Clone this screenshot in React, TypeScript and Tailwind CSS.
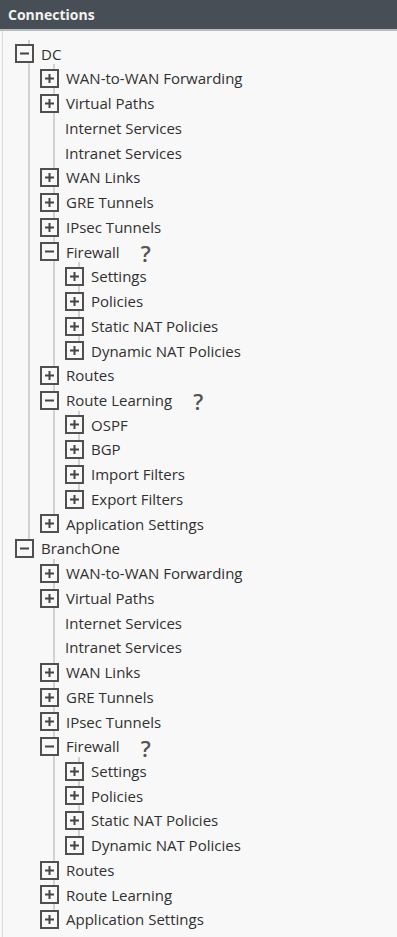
import React from "react";

type Node = { label: string; help?: boolean; box?: boolean; open?: boolean; children?: Node[] };

const leaf = (label: string): Node => ({ label, box: true });
const plain = (label: string): Node => ({ label, box: false });

const firewall = (): Node => ({
  label: "Firewall",
  help: true,
  box: true,
  open: true,
  children: [leaf("Settings"), leaf("Policies"), leaf("Static NAT Policies"), leaf("Dynamic NAT Policies")],
});

const tree: Node[] = [
  {
    label: "DC",
    box: true,
    open: true,
    children: [
      leaf("WAN-to-WAN Forwarding"),
      leaf("Virtual Paths"),
      plain("Internet Services"),
      plain("Intranet Services"),
      leaf("WAN Links"),
      leaf("GRE Tunnels"),
      leaf("IPsec Tunnels"),
      firewall(),
      leaf("Routes"),
      {
        label: "Route Learning",
        help: true,
        box: true,
        open: true,
        children: [leaf("OSPF"), leaf("BGP"), leaf("Import Filters"), leaf("Export Filters")],
      },
      leaf("Application Settings"),
    ],
  },
  {
    label: "BranchOne",
    box: true,
    open: true,
    children: [
      leaf("WAN-to-WAN Forwarding"),
      leaf("Virtual Paths"),
      plain("Internet Services"),
      plain("Intranet Services"),
      leaf("WAN Links"),
      leaf("GRE Tunnels"),
      leaf("IPsec Tunnels"),
      firewall(),
      leaf("Routes"),
      leaf("Route Learning"),
      leaf("Application Settings"),
    ],
  },
];

const ROW = 24.74;

const countRows = (n: Node): number =>
  1 + (n.open && n.children ? n.children.reduce((s, c) => s + countRows(c), 0) : 0);

function Box({ open }: { open?: boolean }) {
  return (
    <div className="relative z-10 flex h-[19px] w-[19px] shrink-0 items-center justify-center border-2 border-[#505050] bg-[#f8f8f8]">
      <svg width="11" height="11" viewBox="0 0 11 11">
        <rect x="1" y="4.5" width="9" height="2" fill="#454545" />
        {!open && <rect x="4.5" y="1" width="2" height="9" fill="#454545" />}
      </svg>
    </div>
  );
}

function Row({ node }: { node: Node }) {
  return (
    <div className="flex h-[24.74px] items-center">
      {node.box ? <Box open={node.open} /> : null}
      <span className={node.box ? "ml-[7px] whitespace-nowrap" : "ml-[25px] whitespace-nowrap"}>{node.label}</span>
      {node.help && (
        <span className="relative top-[1px] ml-[21px] text-[22px] font-semibold leading-none text-[#555]">?</span>
      )}
    </div>
  );
}

function Group({ nodes }: { nodes: Node[] }) {
  const before = nodes.slice(0, -1).reduce((s, c) => s + countRows(c), 0);
  const lineH = before * ROW + ROW / 2 + 2;
  return (
    <div className="relative">
      <div className="absolute left-[13px] top-[-2px] w-[2px] bg-[#d2d2d2]" style={{ height: lineH }} />
      {nodes.map((n, i) => (
        <div key={i}>
          <Row node={n} />
          {n.open && n.children && (
            <div className="ml-[25px]">
              <Group nodes={n.children} />
            </div>
          )}
        </div>
      ))}
    </div>
  );
}

export default function App() {
  return (
    <div
      className="min-h-[937px] w-[397px] bg-[#f8f8f8] text-[15px] text-[#303030]"
      style={{ fontFamily: '"Open Sans", "Noto Sans", sans-serif' }}
    >
      <div className="flex h-[29px] items-center bg-[#474e56] pl-[8px] text-[14px] font-bold text-[#f2f2f2]">
        Connections
      </div>
      <div className="h-[2px] bg-[#b9bdc2]" />
      <div className="ml-[2px] min-h-[906px] border-l border-[#dcdcdc] pt-[10.6px] pl-[12px]">
        <Group nodes={tree} />
      </div>
    </div>
  );
}
